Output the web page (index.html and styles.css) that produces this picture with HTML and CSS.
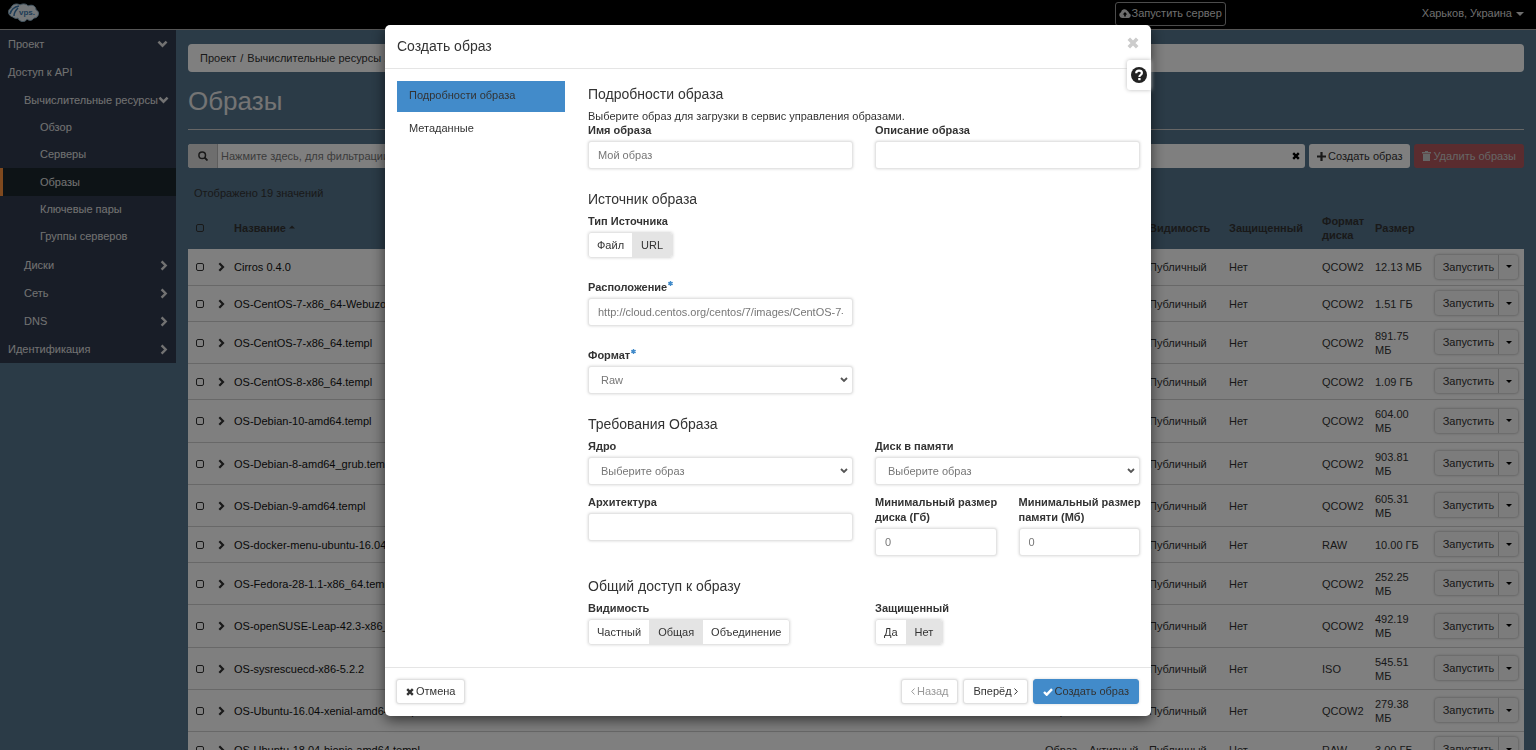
FILE: index.html
```html
<!DOCTYPE html>
<html lang="ru">
<head>
<meta charset="utf-8">
<title>Образы</title>
<link rel="stylesheet" href="styles.css">
</head>
<body>
<svg class="sprite" aria-hidden="true">
  <symbol id="chev-down" viewBox="0 0 10 7"><path d="M1.3 1.3 5 5l3.700-3.700" fill="none" stroke="currentColor" stroke-width="2.300"/></symbol>
  <symbol id="chev-right" viewBox="0 0 7 10"><path d="M1.300 1.300 5 5 1.300 8.700" fill="none" stroke="currentColor" stroke-width="2.200"/></symbol>
  <symbol id="caret" viewBox="0 0 8 4"><path d="M0 0h8L4 4z" fill="currentColor"/></symbol>
  <symbol id="times" viewBox="0 0 10 10"><path d="M1.500 1.500l7 7m0-7l-7 7" fill="none" stroke="currentColor" stroke-width="3"/></symbol>
</svg>

<header class="topbar">
  <a class="logo" href="#" aria-label="vps">
    <svg viewBox="0 0 32 22" width="32" height="22">
      <path d="M5 14C0 13-1 7 3 5c1-4 6-5 9-3 3-2 7-1 8 1 4-2 8 0 8 4 4 1 3 8-2 8-2 3-5 3-7 1-2 4-8 3-9-1-2 1-4 0-5-1z" fill="#e8eef2" stroke="#8fb4cc" stroke-width="1"/>
      <path d="M2 11C3 7 6 4 11 3M6 13c0-3 1-5 4-8" fill="none" stroke="#3b78ae" stroke-width="1.500"/>
      <text x="11" y="12" class="logo-text">vps.</text>
    </svg>
  </a>
  <button class="launch" type="button">
    <svg viewBox="0 0 12 9" width="12" height="9"><path d="M3 9a3 3 0 0 1-1-5.700A3.500 3.500 0 0 1 8.500 2 2.500 2.500 0 0 1 10 4.300 2.400 2.400 0 0 1 9.600 9z" fill="currentColor"/><path d="M6 3 8.300 5.600H6.800V7.500H5.200V5.600H3.700z" fill="#000"/></svg>
    Запустить сервер
  </button>
  <a class="region" href="#">Харьков, Украина <svg width="8" height="4"><use href="#caret"/></svg></a>
</header>

<div class="layout">
  <nav class="sidebar">
    <a href="#">Проект <svg width="11" height="8"><use href="#chev-down"/></svg></a>
    <a href="#">Доступ к API</a>
    <a class="lvl2" href="#">Вычислительные ресурсы <svg width="11" height="8"><use href="#chev-down"/></svg></a>
    <div class="sub">
      <a href="#">Обзор</a>
      <a href="#">Серверы</a>
      <a class="active" href="#">Образы</a>
      <a href="#">Ключевые пары</a>
      <a href="#">Группы серверов</a>
    </div>
    <a class="lvl2" href="#">Диски <svg width="8" height="11"><use href="#chev-right"/></svg></a>
    <a class="lvl2" href="#">Сеть <svg width="8" height="11"><use href="#chev-right"/></svg></a>
    <a class="lvl2" href="#">DNS <svg width="8" height="11"><use href="#chev-right"/></svg></a>
    <a href="#">Идентификация <svg width="8" height="11"><use href="#chev-right"/></svg></a>
  </nav>

  <main class="content">
    <nav class="breadcrumb"><a href="#">Проект</a><span>/</span><a href="#">Вычислительные ресурсы</a><span>/</span><span>Образы</span></nav>
    <h1>Образы</h1>
    <div class="toolbar">
      <div class="search">
        <span class="search-icon"><svg viewBox="0 0 10 10" width="10" height="10"><circle cx="4.200" cy="4.200" r="3.300" fill="none" stroke="currentColor" stroke-width="1.500"/><path d="m6.500 6.500 3 3" stroke="currentColor" stroke-width="1.800"/></svg></span>
        <input type="text" aria-label="Фильтр" placeholder="Нажмите здесь, для фильтрации или полнотекстового поиска.">
        <button type="button" aria-label="Очистить"><svg width="8" height="8"><use href="#times"/></svg></button>
      </div>
      <button class="tool" type="button"><svg viewBox="0 0 9 9" width="9" height="9"><path d="M4.500 0v9M0 4.500h9" stroke="currentColor" stroke-width="2.200"/></svg>Создать образ</button>
      <button class="tool danger" type="button"><svg viewBox="0 0 9 10" width="9" height="10"><path d="M3 0h3v1h3v1.500H0V1h3zM1 3h7v7H1z" fill="currentColor"/></svg>Удалить образы</button>
    </div>
    <p class="count">Отображено 19 значений</p>
    <table>
      <colgroup><col class="c-check"><col class="c-exp"><col><col class="c-type"><col class="c-status"><col class="c-vis"><col class="c-prot"><col class="c-format"><col class="c-size"><col class="c-act"></colgroup>
      <thead><tr><th><input type="checkbox" aria-label="Выбрать все"></th><th></th><th>Название <svg class="sort" viewBox="0 0 8 4" width="6" height="4"><path d="M0 4h8L4 0z" fill="currentColor"/></svg></th><th>Тип</th><th>Статус</th><th>Видимость</th><th>Защищенный</th><th>Формат диска</th><th>Размер</th><th></th></tr></thead>
      <tbody>
        <tr><td><input type="checkbox" aria-label="Cirros 0.4.0"></td><td><svg width="7" height="10"><use href="#chev-right"/></svg></td><td><a href="#">Cirros 0.4.0</a></td><td>Образ</td><td>Активный</td><td>Публичный</td><td>Нет</td><td>QCOW2</td><td>12.13 МБ</td><td><div class="split"><button type="button">Запустить</button><button type="button" aria-label="Ещё"><svg width="6" height="3"><use href="#caret"/></svg></button></div></td></tr>
        <tr><td><input type="checkbox" aria-label="OS-CentOS-7-x86_64-Webuzo"></td><td><svg width="7" height="10"><use href="#chev-right"/></svg></td><td><a href="#">OS-CentOS-7-x86_64-Webuzo.templ</a></td><td>Образ</td><td>Активный</td><td>Публичный</td><td>Нет</td><td>QCOW2</td><td>1.51 ГБ</td><td><div class="split"><button type="button">Запустить</button><button type="button" aria-label="Ещё"><svg width="6" height="3"><use href="#caret"/></svg></button></div></td></tr>
        <tr><td><input type="checkbox" aria-label="OS-CentOS-7-x86_64"></td><td><svg width="7" height="10"><use href="#chev-right"/></svg></td><td><a href="#">OS-CentOS-7-x86_64.templ</a></td><td>Образ</td><td>Активный</td><td>Публичный</td><td>Нет</td><td>QCOW2</td><td>891.75 МБ</td><td><div class="split"><button type="button">Запустить</button><button type="button" aria-label="Ещё"><svg width="6" height="3"><use href="#caret"/></svg></button></div></td></tr>
        <tr><td><input type="checkbox" aria-label="OS-CentOS-8-x86_64"></td><td><svg width="7" height="10"><use href="#chev-right"/></svg></td><td><a href="#">OS-CentOS-8-x86_64.templ</a></td><td>Образ</td><td>Активный</td><td>Публичный</td><td>Нет</td><td>QCOW2</td><td>1.09 ГБ</td><td><div class="split"><button type="button">Запустить</button><button type="button" aria-label="Ещё"><svg width="6" height="3"><use href="#caret"/></svg></button></div></td></tr>
        <tr><td><input type="checkbox" aria-label="OS-Debian-10-amd64"></td><td><svg width="7" height="10"><use href="#chev-right"/></svg></td><td><a href="#">OS-Debian-10-amd64.templ</a></td><td>Образ</td><td>Активный</td><td>Публичный</td><td>Нет</td><td>QCOW2</td><td>604.00 МБ</td><td><div class="split"><button type="button">Запустить</button><button type="button" aria-label="Ещё"><svg width="6" height="3"><use href="#caret"/></svg></button></div></td></tr>
        <tr><td><input type="checkbox" aria-label="OS-Debian-8-amd64_grub"></td><td><svg width="7" height="10"><use href="#chev-right"/></svg></td><td><a href="#">OS-Debian-8-amd64_grub.templ</a></td><td>Образ</td><td>Активный</td><td>Публичный</td><td>Нет</td><td>QCOW2</td><td>903.81 МБ</td><td><div class="split"><button type="button">Запустить</button><button type="button" aria-label="Ещё"><svg width="6" height="3"><use href="#caret"/></svg></button></div></td></tr>
        <tr><td><input type="checkbox" aria-label="OS-Debian-9-amd64"></td><td><svg width="7" height="10"><use href="#chev-right"/></svg></td><td><a href="#">OS-Debian-9-amd64.templ</a></td><td>Образ</td><td>Активный</td><td>Публичный</td><td>Нет</td><td>QCOW2</td><td>605.31 МБ</td><td><div class="split"><button type="button">Запустить</button><button type="button" aria-label="Ещё"><svg width="6" height="3"><use href="#caret"/></svg></button></div></td></tr>
        <tr><td><input type="checkbox" aria-label="OS-docker-menu-ubuntu"></td><td><svg width="7" height="10"><use href="#chev-right"/></svg></td><td><a href="#">OS-docker-menu-ubuntu-16.04-x64.templ</a></td><td>Образ</td><td>Активный</td><td>Публичный</td><td>Нет</td><td>RAW</td><td>10.00 ГБ</td><td><div class="split"><button type="button">Запустить</button><button type="button" aria-label="Ещё"><svg width="6" height="3"><use href="#caret"/></svg></button></div></td></tr>
        <tr><td><input type="checkbox" aria-label="OS-Fedora-28"></td><td><svg width="7" height="10"><use href="#chev-right"/></svg></td><td><a href="#">OS-Fedora-28-1.1-x86_64.templ</a></td><td>Образ</td><td>Активный</td><td>Публичный</td><td>Нет</td><td>QCOW2</td><td>252.25 МБ</td><td><div class="split"><button type="button">Запустить</button><button type="button" aria-label="Ещё"><svg width="6" height="3"><use href="#caret"/></svg></button></div></td></tr>
        <tr><td><input type="checkbox" aria-label="OS-openSUSE-Leap"></td><td><svg width="7" height="10"><use href="#chev-right"/></svg></td><td><a href="#">OS-openSUSE-Leap-42.3-x86_64.templ</a></td><td>Образ</td><td>Активный</td><td>Публичный</td><td>Нет</td><td>QCOW2</td><td>492.19 МБ</td><td><div class="split"><button type="button">Запустить</button><button type="button" aria-label="Ещё"><svg width="6" height="3"><use href="#caret"/></svg></button></div></td></tr>
        <tr><td><input type="checkbox" aria-label="OS-sysrescuecd"></td><td><svg width="7" height="10"><use href="#chev-right"/></svg></td><td><a href="#">OS-sysrescuecd-x86-5.2.2</a></td><td>Образ</td><td>Активный</td><td>Публичный</td><td>Нет</td><td>ISO</td><td>545.51 МБ</td><td><div class="split"><button type="button">Запустить</button><button type="button" aria-label="Ещё"><svg width="6" height="3"><use href="#caret"/></svg></button></div></td></tr>
        <tr><td><input type="checkbox" aria-label="OS-Ubuntu-16.04"></td><td><svg width="7" height="10"><use href="#chev-right"/></svg></td><td><a href="#">OS-Ubuntu-16.04-xenial-amd64.templ</a></td><td>Образ</td><td>Активный</td><td>Публичный</td><td>Нет</td><td>QCOW2</td><td>279.38 МБ</td><td><div class="split"><button type="button">Запустить</button><button type="button" aria-label="Ещё"><svg width="6" height="3"><use href="#caret"/></svg></button></div></td></tr>
        <tr><td><input type="checkbox" aria-label="OS-Ubuntu-18.04"></td><td><svg width="7" height="10"><use href="#chev-right"/></svg></td><td><a href="#">OS-Ubuntu-18.04-bionic-amd64.templ</a></td><td>Образ</td><td>Активный</td><td>Публичный</td><td>Нет</td><td>RAW</td><td>3.00 ГБ</td><td><div class="split"><button type="button">Запустить</button><button type="button" aria-label="Ещё"><svg width="6" height="3"><use href="#caret"/></svg></button></div></td></tr>
      </tbody>
    </table>
  </main>
</div>

<div class="backdrop">
  <section class="modal" role="dialog" aria-labelledby="modal-title">
    <header class="modal-head">
      <h2 id="modal-title">Создать образ</h2>
      <button class="close" type="button" aria-label="Закрыть"><svg width="12" height="12"><use href="#times"/></svg></button>
    </header>
    <button class="help" type="button" aria-label="Справка"><svg viewBox="0 0 16 16" width="16" height="16"><circle cx="8" cy="8" r="8" fill="currentColor"/><path d="M5.200 6.200C5.200 2.700 10.900 2.900 10.900 6c0 2-2.500 2-2.500 3.900" fill="none" stroke="#fff" stroke-width="2.200"/><path d="M7.200 11h2.400v2.200H7.200z" fill="#fff"/></svg></button>
    <div class="modal-body">
      <nav class="steps"><a class="current" href="#">Подробности образа</a><a href="#">Метаданные</a></nav>
      <form class="form" id="image-form">
        <section>
          <h3>Подробности образа</h3>
          <p>Выберите образ для загрузки в сервис управления образами.</p>
          <div class="row">
            <div class="field"><label for="name">Имя образа</label><input id="name" type="text" placeholder="Мой образ"></div>
            <div class="field"><label for="desc">Описание образа</label><input id="desc" type="text"></div>
          </div>
        </section>
        <section>
          <h3>Источник образа</h3>
          <div class="stack">
            <div class="row"><div class="field"><span class="label" id="src">Тип Источника</span><div class="group" role="group" aria-labelledby="src"><button type="button">Файл</button><button class="on" type="button">URL</button></div></div></div>
            <div class="row"><div class="field"><label for="loc">Расположение<span class="req"><svg viewBox="0 0 6 6" width="5" height="5"><path d="M3 0v6M.4 1.500l5.200 3M5.600 1.500.4 4.500" stroke="currentColor" stroke-width="1.700"/></svg></span></label><input id="loc" type="text" placeholder="http://cloud.centos.org/centos/7/images/CentOS-7-x86_64-GenericCloud.qcow2"></div><div class="field"></div></div>
            <div class="row"><div class="field"><label for="fmt">Формат<span class="req"><svg viewBox="0 0 6 6" width="5" height="5"><path d="M3 0v6M.4 1.500l5.200 3M5.600 1.500.4 4.500" stroke="currentColor" stroke-width="1.700"/></svg></span></label><select id="fmt"><option>Raw</option></select></div><div class="field"></div></div>
          </div>
        </section>
        <section>
          <h3>Требования Образа</h3>
          <div class="stack tight">
            <div class="row">
              <div class="field"><label for="kernel">Ядро</label><select id="kernel"><option>Выберите образ</option></select></div>
              <div class="field"><label for="ramdisk">Диск в памяти</label><select id="ramdisk"><option>Выберите образ</option></select></div>
            </div>
            <div class="row">
              <div class="field"><label for="arch">Архитектура</label><input id="arch" type="text"></div>
              <div class="row">
                <div class="field"><label for="mindisk">Минимальный размер<br>диска (Гб)</label><input id="mindisk" type="text" value="0"></div>
                <div class="field"><label for="minram">Минимальный размер<br>памяти (Мб)</label><input id="minram" type="text" value="0"></div>
              </div>
            </div>
          </div>
        </section>
        <section>
          <h3>Общий доступ к образу</h3>
          <div class="row">
            <div class="field"><span class="label" id="vis">Видимость</span><div class="group" role="group" aria-labelledby="vis"><button type="button">Частный</button><button class="on" type="button">Общая</button><button type="button">Объединение</button></div></div>
            <div class="field"><span class="label" id="prot">Защищенный</span><div class="group" role="group" aria-labelledby="prot"><button type="button">Да</button><button class="on" type="button">Нет</button></div></div>
          </div>
        </section>
      </form>
    </div>
    <footer class="modal-foot">
      <button class="btn" type="button"><svg width="8" height="8"><use href="#times"/></svg>Отмена</button>
      <div class="foot-right">
        <button class="btn" type="button" disabled><svg viewBox="0 0 4 7" width="4" height="7"><path d="M3.500.5.700 3.500l2.800 3" fill="none" stroke="currentColor"/></svg>Назад</button>
        <button class="btn" type="button">Вперёд<svg viewBox="0 0 4 7" width="4" height="7"><path d="m.5.500 2.800 3-2.800 3" fill="none" stroke="currentColor"/></svg></button>
        <button class="btn primary" type="submit" form="image-form"><svg viewBox="0 0 10 8" width="10" height="8"><path d="m1 4 2.700 2.700L9 1.200" fill="none" stroke="#fff" stroke-width="2.400"/></svg>Создать образ</button>
      </div>
    </footer>
  </section>
</div>
</body>
</html>
```
FILE: styles.css
```css
* { box-sizing: border-box; }

body {
  margin: 0;
  height: 100vh;
  overflow: hidden;
  background: #56768e;
  color: #333;
  font: 11px/15px "Liberation Sans", Arial, sans-serif;
}

a { color: inherit; text-decoration: none; }
button, input, select { font: inherit; color: inherit; margin: 0; }
button { padding: 0; border: 0; background: none; white-space: nowrap; }
h1, h2, h3, p { margin: 0; font-weight: normal; }
svg { flex: none; }
.sprite { display: none; }

.topbar {
  display: flex;
  align-items: center;
  height: 30px;
  padding: 0 12px 2px 8px;
  background: #000;
  border-bottom: 1px solid #aaa;
  color: #ddd;
}
.logo { display: flex; margin-right: auto; }
.logo-text { font: bold 8px "Liberation Sans", sans-serif; fill: #3b78ae; }
.launch {
  display: flex;
  align-items: center;
  gap: 1px;
  height: 24px;
  padding: 0 3px;
  margin-right: 196px;
  border: 1px solid #999;
  border-radius: 3px;
}
.region { display: flex; align-items: center; gap: 4px; }

.layout { display: flex; align-items: flex-start; }
.sidebar { width: 176px; flex: none; background: #303a4e; color: #e4e4e4; }
.sidebar a {
  display: flex;
  align-items: center;
  justify-content: space-between;
  height: 28px;
  padding: 0 8px;
  white-space: nowrap;
}
.sidebar .lvl2 { padding-left: 24px; }
.sub { padding-bottom: 1px; }
.sidebar .sub a { height: 27px; padding-left: 40px; }
.sidebar .sub .active {
  height: 28px;
  padding-left: 37px;
  border-left: 3px solid #ff923c;
  background: #1a262c;
}

.content { flex: 1; min-width: 0; padding: 14px 12px 0; }
.breadcrumb {
  display: flex;
  align-items: center;
  gap: 4px;
  height: 28px;
  padding: 0 12px;
  border-radius: 4px;
  background: #fff;
}
h1 {
  padding: 12px 0 11px;
  border-bottom: 1px solid #ccc;
  color: #e8e8e8;
  font-size: 26px;
  line-height: 34px;
}
.toolbar { display: flex; gap: 4px; height: 24px; margin-top: 14px; }
.search { display: flex; flex: 1; border-radius: 3px; background: #fff; overflow: hidden; }
.search-icon { display: flex; align-items: center; justify-content: center; width: 30px; background: #ddd; border-right: 1px solid #bbb; }
.search input { flex: 1; border: 0; padding: 0 3px; background: none; }
.search button { width: 18px; color: #000; }
::placeholder { color: #777; opacity: 1; }
.tool { display: flex; align-items: center; gap: 2px; padding: 0 8px; border-radius: 3px; background: #fff; }
.danger { background: #b5595e; color: #ccc; }
.count { margin: 18px 0 0 6px; }

table { width: 100%; margin-top: 5px; border-collapse: collapse; table-layout: fixed; }
.c-check { width: 23px; }
.c-exp { width: 17px; }
.c-type { width: 44px; }
.c-status { width: 60px; }
.c-vis { width: 80px; }
.c-prot { width: 93px; }
.c-format { width: 53px; }
.c-size { width: 60px; }
.c-act { width: 95px; }
th, td { padding: 0 6px; text-align: left; vertical-align: middle; line-height: 14px; }
th { height: 43px; }
td { height: 36px; padding-top: 7px; padding-bottom: 6px; }
td:last-child { padding-top: 0; padding-bottom: 0; }
td svg, th svg, td input, th input { display: block; }
th .sort { display: inline-block; vertical-align: 3px; }
tbody { background: #fff; }
tbody tr { border-bottom: 1px solid #d0d0d0; }
tbody tr:nth-child(5n) td { height: 43px; }
tbody a { color: #111; }
input[type="checkbox"] {
  appearance: none;
  width: 8px;
  height: 8px;
  margin-left: 2px;
  border: 1px solid #333;
  border-radius: 2px;
}
td:nth-child(2) { padding-left: 7px; padding-right: 0; }
.split { display: flex; height: 24px; border-radius: 3px; background: #f8f8f8; box-shadow: 0 0 3px #999; }
.split button:first-child { flex: 1; padding-left: 4px; }
.split button:last-child { display: flex; align-items: center; justify-content: center; width: 20px; border-left: 1px solid #ccc; color: #000; }

.backdrop { position: fixed; inset: 0; padding-top: 25px; background: rgba(0, 0, 0, .5); }
.modal {
  position: relative;
  width: calc(50% - 2px);
  margin: 0 auto;
  border-radius: 5px;
  background: #fff;
  box-shadow: 0 4px 14px rgba(0, 0, 0, .6);
}
.modal-head {
  display: flex;
  align-items: center;
  justify-content: space-between;
  height: 44px;
  padding: 0 12px 2px;
  border-bottom: 1px solid #e5e5e5;
}
h2, h3 { font-size: 14px; line-height: 20px; }
.close { display: flex; color: #ccc; padding-bottom: 6px; }
.help {
  position: absolute;
  top: 35px;
  right: 0;
  display: flex;
  align-items: center;
  justify-content: center;
  width: 24px;
  height: 30px;
  border-radius: 3px 0 0 3px;
  background: #fff;
  box-shadow: 0 0 4px #bbb;
  color: #222;
}
.modal-body { display: flex; gap: 23px; padding: 12px 11px 22px 12px; }
.steps { flex: 0 0 168px; }
.steps a { display: block; padding: 7px 12px 9px; }
.steps .current { background: #428bca; margin-bottom: 2px; }
.form { flex: 1; min-width: 0; padding-top: 3px; display: grid; gap: 20px; }
.form h3 { margin-bottom: 5px; }
.form p { line-height: 14px; }
.row { display: grid; grid-template-columns: 1fr 1fr; gap: 22px; align-items: start; }
.stack { display: grid; gap: 22px; }
.tight { gap: 10px; }
.field { min-width: 0; }
label, .label { display: block; margin-bottom: 3px; font-weight: bold; white-space: nowrap; }
.req svg { color: #428bca; vertical-align: 5px; margin-left: 1px; }
.field input, .field select {
  display: block;
  width: 100%;
  height: 28px;
  padding: 0 9px;
  border: 1px solid #e4e4e4;
  border-radius: 3px;
  background: #fff;
  box-shadow: 0 0 3px #d4d4d4;
  color: #777;
}
.field select {
  appearance: none;
  padding: 0 20px 0 12px;
  background: #fff url("data:image/svg+xml,%3Csvg xmlns='http://www.w3.org/2000/svg' width='8' height='6'%3E%3Cpath d='M1 1l3 3 3-3' fill='none' stroke='%23555' stroke-width='1.800'/%3E%3C/svg%3E") no-repeat right 4px center;
}
.group { display: inline-flex; height: 26px; border: 1px solid #e4e4e4; border-radius: 3px; box-shadow: 0 0 3px #d4d4d4; overflow: hidden; vertical-align: top; }
.group button { padding: 0 8px; }
.group .on { padding: 0 9px; background: #e4e4e4; }

.modal-foot { display: flex; justify-content: space-between; padding: 11px 12px 12px 11px; border-top: 1px solid #e5e5e5; }
.foot-right { display: flex; gap: 5px; }
.btn {
  display: flex;
  align-items: center;
  gap: 2px;
  height: 25px;
  padding: 0 9px;
  border: 1px solid #e0e0e0;
  border-radius: 3px;
  background: #fff;
  box-shadow: 0 0 3px #d4d4d4;
}
.btn:disabled { color: #999; }
.primary { background: #428bca; border-color: #428bca; }
```
